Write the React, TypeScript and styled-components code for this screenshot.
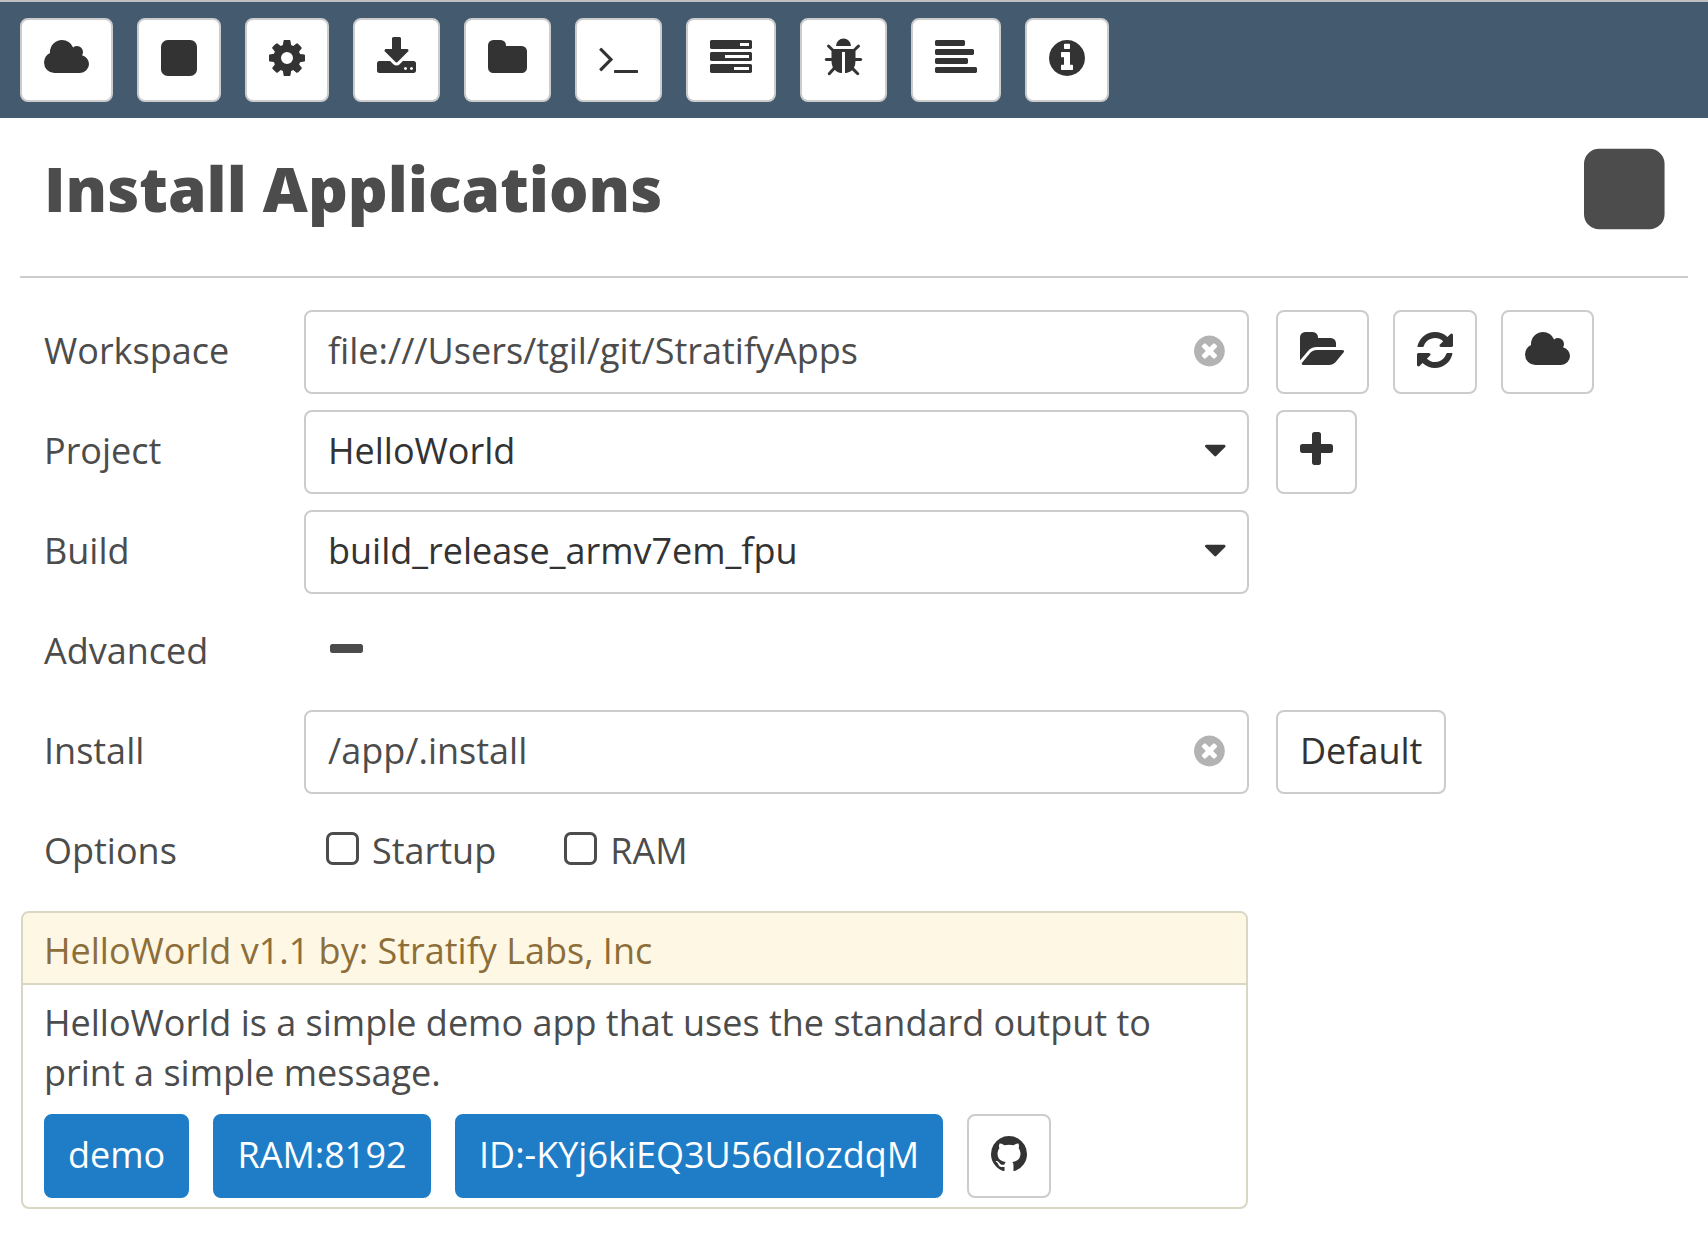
import React from "react";
import styled, { createGlobalStyle, css } from "styled-components";

const GlobalStyle = createGlobalStyle`
  *, *::before, *::after { box-sizing: border-box; }
  body {
    margin: 0;
    background: #fff;
    color: #4c4c4c;
    font-family: "Open Sans", "Noto Sans", sans-serif;
    font-size: 36px;
    line-height: 50px;
  }
`;

/* Glyphs sit on an 1792-unit em; each has its own left edge and advance. */
const CIRCLE =
  "m640 416q0 209-103 385.5t-279.5 279.5-385.5 103-385.5-103-279.5-279.5-103-385.5 103-385.5 279.5-279.5 385.5-103 385.5 103 279.5 279.5 103 385.5z";

const bar = (y: number, w: number) =>
  `M${w} ${y + 64}v128q0 26-19 45t-45 19h-${w - 128}q-26 0-45-19t-19-45v-128q0-26 19-45t45-19h${w - 128}q26 0 45 19t19 45z`;

const taskBox = "v256q0 26-19 45t-45 19h-1664q-26 0-45-19t-19-45v-256q0-26 19-45t45-19h1664q26 0 45 19t19 45z";

const glyphs = {
  cloud: { x: 64, w: 1920, d: "M1984 1152q0 159-112.5 271.5t-271.5 112.5h-1088q-185 0-316.5-131.5t-131.5-316.5q0-132 71-241.5t187-163.5q-2-28-2-43 0-212 150-362t362-150q158 0 286.5 88t187.5 230q70-62 166-62 106 0 181 75t75 181q0 75-41 138 129 30 213 134.5t84 239.5z" },
  square: { x: 128, w: 1536, d: "M1664 416v960q0 119-84.5 203.5t-203.5 84.5h-960q-119 0-203.5-84.5t-84.5-203.5v-960q0-119 84.5-203.5t203.5-84.5h960q119 0 203.5 84.5t84.5 203.5z" },
  cog: { x: 128, w: 1536, d: "M1152 896q0-106-75-181t-181-75-181 75-75 181 75 181 181 75 181-75 75-181zm512-109v222q0 12-8 23t-20 13l-185 28q-19 54-39 91 35 50 107 138 10 12 10 25t-9 23q-27 37-99 108t-94 71q-12 0-26-9l-138-108q-44 23-91 38-16 136-29 186-7 28-36 28h-222q-14 0-24.5-8.5t-11.5-21.5l-28-184q-49-16-90-37l-141 107q-10 9-25 9-14 0-25-11-126-114-165-168-7-10-7-23 0-12 8-23 15-21 51-66.5t54-70.5q-27-50-41-99l-183-27q-13-2-21-12.5t-8-23.5v-222q0-12 8-23t19-13l186-28q14-46 39-92-40-57-107-138-10-12-10-24 0-10 9-23 26-36 98.5-107.5t94.5-71.5q13 0 26 10l138 107q44-23 91-38 16-136 29-186 7-28 36-28h222q14 0 24.5 8.5t11.5 21.5l28 184q49 16 90 37l142-107q9-9 24-9 13 0 25 10 129 119 165 170 7 8 7 22 0 12-8 23-15 21-51 66.5t-54 70.5q26 50 41 98l183 28q13 2 21 12.5t8 23.5z" },
  download: { x: 64, w: 1664, d: "M1344 1344q0-26-19-45t-45-19-45 19-19 45 19 45 45 19 45-19 19-45zm256 0q0-26-19-45t-45-19-45 19-19 45 19 45 45 19 45-19 19-45zm128-224v320q0 40-28 68t-68 28h-1472q-40 0-68-28t-28-68v-320q0-40 28-68t68-28h465l135 136q58 56 136 56t136-56l136-136h464q40 0 68 28t28 68zm-325-569q17 41-14 70l-448 448q-18 19-45 19t-45-19l-448-448q-31-29-14-70 17-39 59-39h256v-448q0-26 19-45t45-19h256q26 0 45 19t19 45v448h256q42 0 59 39z" },
  folder: { x: 64, w: 1664, d: "M1728 608v704q0 92-66 158t-158 66h-1216q-92 0-158-66t-66-158v-960q0-92 66-158t158-66h320q92 0 158 66t66 158v32h672q92 0 158 66t66 158z" },
  terminal: { x: 64, w: 1664, d: "M649 983l-466 466q-10 10-23 10t-23-10l-50-50q-10-10-10-23t10-23l393-393-393-393q-10-10-10-23t10-23l50-50q10-10 23-10t23 10l466 466q10 10 10 23t-10 23zm1079 457v64q0 14-9 23t-23 9h-960q-14 0-23-9t-9-23v-64q0-14 9-23t23-9h960q14 0 23 9t9 23z" },
  tasks: { x: 0, w: 1792, d: `M1024 1408h640v-128h-640v128zm-384-512h1024v-128h-1024v128zm640-512h384v-128h-384v128zM1792 1216${taskBox}M1792 704${taskBox}M1792 192${taskBox}` },
  bug: { x: 64, w: 1664, d: "M1696 960q0 26-19 45t-45 19h-224q0 171-67 290l208 209q19 19 19 45t-19 45q-18 19-45 19t-45-19l-198-197q-5 5-15 13t-42 28.5-65 36.5-82 29-97 13v-896h-128v896q-51 0-101.5-13.5t-87-33-66-39-43.5-32.5l-15-14-183 207q-20 21-48 21-24 0-43-16-19-18-20.5-44.5t15.5-46.5l202-227q-58-114-58-274h-224q-26 0-45-19t-19-45 19-45 45-19h224v-294l-173-173q-19-19-19-45t19-45 45-19 45 19l173 173h844l173-173q19-19 45-19t45 19 19 45-19 45l-173 173v294h224q26 0 45 19t19 45zm-480-576h-640q0-133 93.5-226.5t226.5-93.5 226.5 93.5 93.5 226.5z" },
  alignLeft: { x: 0, w: 1792, d: bar(128, 1280) + bar(512, 1664) + bar(896, 1408) + bar(1280, 1792) },
  info: { x: 128, w: 1536, d: "M1152 1376v-160q0-14-9-23t-23-9h-96v-512q0-14-9-23t-23-9h-320q-14 0-23 9t-9 23v160q0 14 9 23t23 9h96v320h-96q-14 0-23 9t-9 23v160q0 14 9 23t23 9h448q14 0 23-9t9-23zm-128-896v-160q0-14-9-23t-23-9h-192q-14 0-23 9t-9 23v160q0 14 9 23t23 9h192q14 0 23-9t9-23z" + CIRCLE },
  folderOpen: { x: 64, w: 1920, d: "M1943 952q0 31-31 66l-336 396q-43 51-120.5 86.5t-143.5 35.5h-1088q-34 0-60.5-13t-26.5-43q0-31 31-66l336-396q43-51 120.5-86.5t143.5-35.5h1088q34 0 60.5 13t26.5 43zm-343-344v160h-832q-94 0-197 47.5t-164 119.5l-337 396-5 6q0-4-.5-12.5t-.5-12.5v-960q0-92 66-158t158-66h320q92 0 158 66t66 158v32h544q92 0 158 66t66 158z" },
  refresh: { x: 128, w: 1536, d: "M1639 1056q0 5-1 7-64 268-268 434.5t-478 166.5q-146 0-282.5-55t-243.5-157l-129 129q-19 19-45 19t-45-19-19-45v-448q0-26 19-45t45-19h448q26 0 45 19t19 45-19 45l-137 137q71 66 161 102t187 36q134 0 250-65t186-179q11-17 53-117 8-23 30-23h192q13 0 22.5 9.5t9.5 22.5zm25-800v448q0 26-19 45t-45 19h-448q-26 0-45-19t-19-45 19-45l138-138q-148-137-349-137-134 0-250 65t-186 179q-11 17-53 117-8 23-30 23h-199q-13 0-22.5-9.5t-9.5-22.5v-7q65-268 270-434.5t480-166.5q146 0 284 55.5t245 156.5l130-129q19-19 45-19t45 19 19 45z" },
  plus: { x: 192, w: 1408, d: "M1600 736v192q0 40-28 68t-68 28h-416v416q0 40-28 68t-68 28h-192q-40 0-68-28t-28-68v-416h-416q-40 0-68-28t-28-68v-192q0-40 28-68t68-28h416v-416q0-40 28-68t68-28h192q40 0 68 28t28 68v416h416q40 0 68 28t28 68z" },
  minus: { x: 192, w: 1408, d: "M1600 736v192q0 40-28 68t-68 28h-1216q-40 0-68-28t-28-68v-192q0-40 28-68t68-28h1216q40 0 68 28t28 68z" },
  squareO: { x: 192, w: 1408, d: "M1312 256h-832q-66 0-113 47t-47 113v832q0 66 47 113t113 47h832q66 0 113-47t47-113v-832q0-66-47-113t-113-47zm288 160v832q0 119-84.5 203.5t-203.5 84.5h-832q-119 0-203.5-84.5t-84.5-203.5v-832q0-119 84.5-203.5t203.5-84.5h832q119 0 203.5 84.5t84.5 203.5z" },
  clear: { x: 128, w: 1536, d: "M1277 1122q0-26-19-45l-181-181 181-181q19-19 19-45 0-27-19-46l-90-90q-19-19-46-19-26 0-45 19l-181 181-181-181q-19-19-45-19-27 0-46 19l-90 90q-19 19-19 46 0 26 19 45l181 181-181 181q-19 19-19 45 0 27 19 46l90 90q19 19 46 19 26 0 45-19l181-181 181 181q19 19 45 19 27 0 46-19l90-90q19-19 19-46zM1024 480" + CIRCLE },
  caret: { x: 384, w: 1024, d: "M1408 704q0 26-19 45l-448 448q-19 19-45 19t-45-19l-448-448q-19-19-19-45t19-45 45-19h896q26 0 45 19t19 45z" },
  github: { x: 128, w: 1536, d: "M896 128q209 0 385.5 103t279.5 279.5 103 385.5q0 251-146.5 451.5t-378.5 277.5q-27 5-40-7t-13-30q0-3 .5-76.5t.5-134.5q0-97-52-142 57-6 102.5-18t94-39 81-66.5 53-105 20.5-150.5q0-119-79-206 37-91-8-204-28-9-81 11t-92 44l-38 24q-93-26-192-26t-192 26q-16-11-42.5-27t-83.5-38.5-85-13.5q-45 113-8 204-79 87-79 206 0 85 20.5 150t52.5 105 80.5 67 94 39 102.5 18q-39 36-49 103-21 10-45 15t-57 5-65.5-21.5-55.5-62.5q-19-32-48.5-52t-49.5-24l-20-3q-21 0-29 4.5t-5 11.5 9 14 13 12l7 5q22 10 43.5 38t31.5 51l10 23q13 38 44 61.5t67 30 69.5 7 55.5-3.5l23-4q0 38 .5 88.5t.5 54.5q0 18-13 30t-40 7q-232-77-378.5-277.5t-146.5-451.5q0-209 103-385.5t279.5-279.5 385.5-103z" },
};

type GlyphName = keyof typeof glyphs;

const Svg = styled.svg`
  display: block;
  flex: none;
  fill: currentColor;
  overflow: visible;
`;

function Glyph({ name, em = 42 }: { name: GlyphName; em?: number }) {
  const g = glyphs[name];
  return (
    <Svg
      width={(g.w / 1792) * em}
      height={em}
      viewBox={`${g.x} 0 ${g.w} 1792`}
      fillRule={name === "alignLeft" ? "nonzero" : "evenodd"}
      aria-hidden="true"
    >
      <path d={g.d} />
    </Svg>
  );
}

const control = css`
  height: 84px;
  padding: 13px 22px 17px;
  border: 2px solid #ccc;
  border-radius: 8px;
  background: #fff;
  display: flex;
  align-items: center;
  white-space: nowrap;
`;

/* Text sits one pixel below the optical centre of the glyphs beside it. */
const Text = styled.span`
  padding-top: 2px;
`;

const Button = styled.button`
  ${control}
  flex: none;
  margin: 0;
  color: #333;
  font: inherit;
`;

const Tag = styled.span<{ $width: number }>`
  ${control}
  flex: none;
  justify-content: center;
  width: ${(p) => p.$width}px;
  border-color: #1e7dc6;
  background: #1e7dc6;
  color: #fff;
`;

const Toolbar = styled.nav`
  display: flex;
  gap: 24px;
  height: 118px;
  padding: 16px 20px;
  border-top: 2px solid #c0c0c2;
  background: #445a6f;
`;

const Header = styled.header`
  display: flex;
  justify-content: space-between;
  align-items: center;
  height: 160px;
  margin: 0 20px;
  padding: 0 23.5px 16px 24px;
  border-bottom: 2px solid #ccc;
`;

const Title = styled.h1`
  margin: 0;
  padding-bottom: 2px;
  font-size: 62.1px;
  font-weight: 800;
  line-height: 86px;
  white-space: nowrap;
`;

const Form = styled.main`
  display: flex;
  flex-direction: column;
  gap: 16px;
  padding: 32px 20px 0;
`;

const Row = styled.div`
  display: grid;
  grid-template-columns: 260px 945px auto;
  justify-content: start;
  height: 84px;
  padding-left: 24px;
`;

const Label = styled.label`
  padding-top: 16px;
`;

const Field = styled.div<{ $select?: boolean }>`
  ${control}
  justify-content: space-between;
  padding-right: ${(p) => (p.$select ? 21 : 22)}px;
  color: ${(p) => (p.$select ? "#333" : "#4c4c4c")};
`;

const ClearMark = styled.span`
  padding-top: 1px;
  color: #b3b3b3;
`;

const Actions = styled.div`
  display: flex;
  gap: 24px;
  margin-left: 27px;
`;

const Inline = styled.div<{ $indent: number }>`
  display: flex;
  gap: 68px;
  padding: 14px 0 18px ${(p) => p.$indent}px;
`;

const Check = styled.span`
  display: flex;
  align-items: center;
  gap: 13px;
`;

const Panel = styled.section`
  width: 1227px;
  height: 298px;
  margin: 1px 0 0 1px;
  border: 2px solid #dad6c4;
  border-radius: 8px;
  overflow: hidden;
`;

const PanelTitle = styled.div`
  height: 72px;
  padding: 13px 21px 7px;
  border-bottom: 2px solid #dad6c4;
  background: #fdf7e3;
  color: #8d6e3a;
`;

const PanelBody = styled.div`
  padding: 13px 21px 0;
`;

const Description = styled.p`
  width: 1150px;
  margin: 0 0 16px;
`;

const Tags = styled.div`
  display: flex;
  gap: 24px;
`;

const tools: GlyphName[] = [
  "cloud", "square", "cog", "download", "folder", "terminal", "tasks", "bug", "alignLeft", "info",
];

function IconButton({ name }: { name: GlyphName }) {
  return (
    <Button type="button" aria-label={name}>
      <Glyph name={name} />
    </Button>
  );
}

function TextField({ value }: { value: string }) {
  return (
    <Field>
      <Text>{value}</Text>
      <ClearMark>
        <Glyph name="clear" em={36} />
      </ClearMark>
    </Field>
  );
}

function SelectField({ value }: { value: string }) {
  return (
    <Field $select>
      <Text>{value}</Text>
      <Glyph name="caret" em={36} />
    </Field>
  );
}

export default function App() {
  return (
    <>
      <GlobalStyle />
      <Toolbar>
        {tools.map((name) => (
          <IconButton key={name} name={name} />
        ))}
      </Toolbar>
      <Header>
        <Title>Install Applications</Title>
        <Glyph name="square" em={94} />
      </Header>
      <Form>
        <Row>
          <Label>Workspace</Label>
          <TextField value="file:///Users/tgil/git/StratifyApps" />
          <Actions>
            <IconButton name="folderOpen" />
            <IconButton name="refresh" />
            <IconButton name="cloud" />
          </Actions>
        </Row>
        <Row>
          <Label>Project</Label>
          <SelectField value="HelloWorld" />
          <Actions>
            <IconButton name="plus" />
          </Actions>
        </Row>
        <Row>
          <Label>Build</Label>
          <SelectField value="build_release_armv7em_fpu" />
        </Row>
        <Row>
          <Label>Advanced</Label>
          <Inline $indent={26}>
            <Check>
              <Glyph name="minus" />
            </Check>
          </Inline>
        </Row>
        <Row>
          <Label>Install</Label>
          <TextField value="/app/.install" />
          <Actions>
            <Button type="button">
              <Text>Default</Text>
            </Button>
          </Actions>
        </Row>
        <Row>
          <Label>Options</Label>
          <Inline $indent={22}>
            <Check>
              <Glyph name="squareO" />
              <Text>Startup</Text>
            </Check>
            <Check>
              <Glyph name="squareO" />
              <Text>RAM</Text>
            </Check>
          </Inline>
        </Row>
        <Panel>
          <PanelTitle>HelloWorld v1.1 by: Stratify Labs, Inc</PanelTitle>
          <PanelBody>
            <Description>
              HelloWorld is a simple demo app that uses the standard output to print a simple message.
            </Description>
            <Tags>
              <Tag $width={145}>
                <Text>demo</Text>
              </Tag>
              <Tag $width={218}>
                <Text>RAM:8192</Text>
              </Tag>
              <Tag $width={488}>
                <Text>ID:-KYj6kiEQ3U56dIozdqM</Text>
              </Tag>
              <IconButton name="github" />
            </Tags>
          </PanelBody>
        </Panel>
      </Form>
    </>
  );
}
